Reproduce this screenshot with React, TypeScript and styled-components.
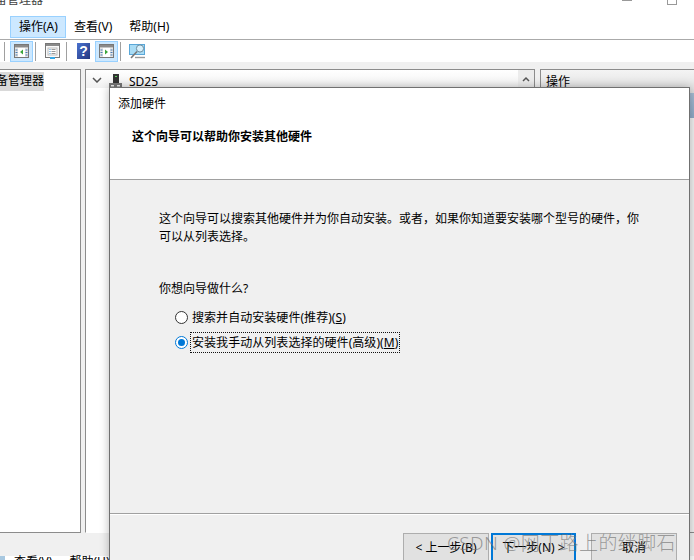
import React from "react";
import styled, { createGlobalStyle } from "styled-components";

const UI_FONT = `"Noto Sans", "Noto Sans CJK SC", "Liberation Sans", sans-serif`;

const Global = createGlobalStyle`
  html, body { margin: 0; padding: 0; background: #fff; }
  body { width: 694px; height: 560px; overflow: hidden; font-family: ${UI_FONT}; color: #000; }
`;

const Page = styled.div`
  position: relative;
  width: 694px;
  height: 560px;
  overflow: hidden;
  display: flex;
  flex-direction: column;
  background: #fff;
`;
const TitleBar = styled.div`
  height: 15px;
  display: flex;
  justify-content: space-between;
  overflow: hidden;
`;
const TitleText = styled.div`
  font-size: 12px;
  line-height: 13px;
  margin-top: -7px;
  margin-left: -17px;
  color: #444;
  white-space: nowrap;
`;
const WinButtons = styled.div`
  display: flex;
  gap: 35px;
  margin-right: 17px;
  align-items: flex-start;
`;
const MinBtn = styled.div`
  width: 10px;
  height: 1px;
  background: #999;
`;
const MaxBtn = styled.div`
  width: 8px;
  height: 4px;
  border: 1px solid #999;
  border-top: 0;
`;
const MenuBar = styled.div`
  height: 24px;
  display: flex;
  align-items: center;
  padding-left: 10px;
  border-bottom: 1px solid #aaa;
`;
const MenuItem = styled.div<{ $active?: boolean }>`
  height: 22px;
  padding: 0 ${(p) => (p.$active ? "8px 0 9px" : "9px 0 8px")};
  font-size: 12px;
  line-height: 22px;
  background: ${(p) => (p.$active ? "#cce8ff" : "transparent")};
  outline: ${(p) => (p.$active ? "1px solid #99d1ff" : "none")};
  outline-offset: -1px;
`;
const ToolBar = styled.div`
  height: 22px;
  padding-left: 4px;
  display: flex;
  align-items: center;
`;
const Sep = styled.div<{ $first?: boolean }>`
  width: 1px;
  height: 19px;
  background: #a0a0a0;
  margin: 0 5px 0 ${(p) => (p.$first ? "0" : "2px")};
`;
const ToolBtn = styled.div<{ $on?: boolean }>`
  width: 23px;
  height: 21px;
  display: flex;
  align-items: center;
  justify-content: center;
  background: ${(p) => (p.$on ? "#cce8ff" : "transparent")};
  outline: ${(p) => (p.$on ? "1px solid #99d1ff" : "none")};
  outline-offset: -1px;
`;
const Work = styled.div`
  flex: 1;
  display: flex;
  background: #f0f0f0;
  padding-top: 7px;
  min-height: 0;
  flex-direction: column;
`;
const Panes = styled.div`
  height: 464px;
  display: flex;
`;
const TreePane = styled.div`
  width: 81px;
  box-sizing: border-box;
  background: #fff;
  border: 1px solid #8c8c8c;
  border-left: 0;
  padding-top: 2px;
  overflow: hidden;
`;
const TreeLabel = styled.div`
  box-sizing: border-box;
  background: #d9d9d9;
  font-size: 12px;
  line-height: 18px;
  height: 19px;
  width: 44px;
  padding-left: 4px;
  white-space: nowrap;
  direction: rtl;
  overflow: hidden;
`;
const MidPane = styled.div`
  margin-left: 4px;
  width: 450px;
  box-sizing: border-box;
  border: 1px solid #8c8c8c;
  border-bottom-color: #fff;
  background: #fff;
`;
const DeviceRow = styled.div`
  height: 18px;
  display: flex;
  align-items: center;
  background: linear-gradient(#fff, #f1f1f1);
`;
const Chevron = styled.div`
  margin-left: 6px;
  margin-top: 2px;
  display: flex;
  width: 12px;
`;
const DeviceIcon = styled.div`
  margin-left: 5px;
  margin-top: 4px;
  display: flex;
`;
const DeviceName = styled.div`
  font-size: 12px;
  margin-left: 6px;
  margin-top: 5px;
`;
const CollapseBtn = styled.div`
  margin-left: auto;
  width: 16px;
  height: 18px;
  background: #ececec;
  display: flex;
  align-items: center;
  justify-content: center;
`;
const ActionPane = styled.div`
  margin-left: 5px;
  flex: 1;
  border: 1px solid #8c8c8c;
  border-right: 0;
  background: #f0f0f0;
  display: flex;
  flex-direction: column;
`;
const ActionHeader = styled.div`
  height: 23px;
  flex: none;
  background: linear-gradient(#f4f4f4, #dedede);
  font-size: 12px;
  padding: 3px 0 0 5px;
  box-sizing: border-box;
  line-height: 18px;
`;
const ActionSection = styled.div`
  height: 25px;
  background: linear-gradient(#a6bcd3, #8ea9c6);
`;
const StatusBar = styled.div`
  flex: 1;
  position: relative;
  overflow: hidden;
`;
const StatusStrip = styled.div`
  position: absolute;
  left: 0;
  right: 0;
  top: 23px;
  bottom: 0;
  background: linear-gradient(90deg, #a8c8e0 5px, #fff 5px);
  font-size: 12px;
  line-height: 12px;
  padding-left: 14px;
  display: flex;
  gap: 17px;
  white-space: nowrap;
`;

const Dialog = styled.div`
  position: absolute;
  left: 109px;
  top: 87px;
  width: 581px;
  height: 480px;
  box-sizing: border-box;
  border: 1px solid #707070;
  background: #f0f0f0;
  display: flex;
  flex-direction: column;
  box-shadow: 0 0 9px rgba(0, 0, 0, 0.28);
`;
const DialogHeader = styled.div`
  height: 91px;
  background: #fff;
  border-bottom: 1px solid #a0a0a0;
  display: flex;
  flex-direction: column;
`;
const DialogTitle = styled.div`
  font-size: 12px;
  line-height: 16px;
  margin: 8px 0 0 8px;
`;
const Heading = styled.div`
  font-size: 12px;
  font-weight: 700;
  line-height: 16px;
  margin: 17px 0 0 22px;
`;
const DialogBody = styled.div`
  height: 334px;
  padding: 30px 40px 0 49px;
  border-bottom: 1px solid #a0a0a0;
  box-sizing: border-box;
`;
const Paragraph = styled.div`
  font-size: 12px;
  line-height: 18px;
`;
const Question = styled.div`
  font-size: 12px;
  line-height: 18px;
  margin-top: 34px;
`;
const RadioList = styled.div`
  margin: 10px 0 0 16px;
  display: flex;
  flex-direction: column;
  gap: 6px;
`;
const RadioRow = styled.div`
  display: flex;
  align-items: center;
  height: 19px;
  gap: 3px;
`;
const RadioDot = styled.div<{ $on?: boolean }>`
  width: 13px;
  height: 13px;
  box-sizing: border-box;
  border-radius: 50%;
  border: 1px solid ${(p) => (p.$on ? "#0078d7" : "#333")};
  background: #fff;
  display: flex;
  align-items: center;
  justify-content: center;
  &::after {
    content: "";
    display: ${(p) => (p.$on ? "block" : "none")};
    width: 7px;
    height: 7px;
    border-radius: 50%;
    background: #0078d7;
  }
`;
const RadioLabel = styled.div<{ $focus?: boolean }>`
  font-size: 12px;
  line-height: 19px;
  letter-spacing: 0.05px;
  padding: 0 1px;
  outline: ${(p) => (p.$focus ? "1px dotted #111" : "none")};
  white-space: nowrap;
`;
const U = styled.span`
  text-decoration: underline;
`;
const Footer = styled.div`
  flex: 1;
  border-top: 1px solid #fff;
  display: flex;
  padding: 18px 0 0 293px;
`;
const Btn = styled.div<{ $primary?: boolean; $w: number; $ml?: number }>`
  width: ${(p) => p.$w}px;
  height: 30px;
  box-sizing: border-box;
  margin-left: ${(p) => p.$ml ?? 0}px;
  border: ${(p) => (p.$primary ? "2px solid #0078d7" : "1px solid #adadad")};
  background: #e1e1e1;
  font-size: 12px;
  line-height: ${(p) => (p.$primary ? "25px" : "27px")};
  text-align: center;
  white-space: nowrap;
`;
const Watermark = styled.div`
  position: absolute;
  left: 447px;
  top: 530px;
  font-size: 19px;
  font-weight: 300;
  line-height: 26px;
  letter-spacing: 0.4px;
  color: rgba(110, 110, 110, 0.65);
  white-space: nowrap;
`;

const WinIcon = ({ arrow, left }: { arrow: string; left: boolean }) => (
  <svg width="15" height="14" viewBox="0 0 15 14">
    <rect x="0.5" y="0.5" width="14" height="13" fill="#fff" stroke="#777" />
    <rect x="1" y="1" width="13" height="2.5" fill="#8a8a8a" />
    <rect x="1" y="4" width="3" height="9" fill="#e4e4e4" />
    <rect x="11" y="4" width="3" height="9" fill="#e4e4e4" />
    <path d="M1.5 6h2M1.5 8.5h2M1.5 11h2M11.5 6h2M11.5 8.5h2M11.5 11h2" stroke="#4a7db5" />
    <path d={left ? "M9 5.5v5L6 8z" : "M6 5.5v5L9 8z"} fill={arrow} />
  </svg>
);
const PropsIcon = () => (
  <svg width="15" height="16" viewBox="0 0 15 16">
    <rect x="0.5" y="0.5" width="14" height="14" fill="#fafafa" stroke="#777" />
    <rect x="1" y="1" width="13" height="2" fill="#8a8a8a" />
    <rect x="3" y="5" width="9" height="7" fill="#fff" stroke="#bbb" />
    <path d="M4.5 6.5h1M4.5 8.5h1M4.5 10.5h1" stroke="#2a8ad4" />
    <path d="M6.5 6.5h4M6.5 8.5h4M6.5 10.5h4" stroke="#999" />
    <rect x="5" y="14" width="5" height="2" fill="#35a8e8" />
  </svg>
);
const HelpIcon = () => (
  <svg width="13" height="16" viewBox="0 0 13 16">
    <defs>
      <linearGradient id="helpFill" x1="0" x2="1" y1="0" y2="1">
        <stop offset="0" stopColor="#4a72cf" />
        <stop offset="1" stopColor="#24367f" />
      </linearGradient>
    </defs>
    <rect width="13" height="16" fill="url(#helpFill)" />
    <text x="6.5" y="13" textAnchor="middle" fontFamily="Liberation Sans" fontSize="14" fontWeight="700" fill="#fff">?</text>
  </svg>
);
const MonitorIcon = () => (
  <svg width="17" height="15" viewBox="0 0 17 15">
    <rect x="0.5" y="0.5" width="15" height="10" fill="#a9dcf5" stroke="#5aa7d8" />
    <circle cx="11" cy="4.5" r="3.6" fill="#d8f0fb" stroke="#6d8c9e" />
    <path d="M8 7.5L2 14" stroke="#777" strokeWidth="1.6" />
    <path d="M6 13.5h10" stroke="#999" strokeWidth="1.4" />
  </svg>
);
const PcIcon = () => (
  <svg width="14" height="14" viewBox="0 0 14 14">
    <rect x="4" y="0" width="6" height="9" fill="#333" />
    <rect x="6" y="2" width="2" height="1" fill="#5ad05a" />
    <rect x="0" y="9" width="13" height="5" fill="#777" />
    <rect x="2" y="11" width="3" height="1.5" fill="#eee" />
    <rect x="8" y="11" width="3" height="1.5" fill="#eee" />
  </svg>
);

export default function App() {
  return (
    <>
      <Global />
      <Page>
        <TitleBar>
          <TitleText>设备管理器</TitleText>
          <WinButtons>
            <MinBtn />
            <MaxBtn />
          </WinButtons>
        </TitleBar>
        <MenuBar>
          <MenuItem $active>操作(A)</MenuItem>
          <MenuItem>查看(V)</MenuItem>
          <MenuItem>帮助(H)</MenuItem>
        </MenuBar>
        <ToolBar>
          <Sep $first />
          <ToolBtn $on><WinIcon arrow="#3aa53a" left /></ToolBtn>
          <Sep />
          <ToolBtn><PropsIcon /></ToolBtn>
          <Sep />
          <ToolBtn><HelpIcon /></ToolBtn>
          <ToolBtn $on><WinIcon arrow="#3aa53a" left={false} /></ToolBtn>
          <Sep />
          <ToolBtn><MonitorIcon /></ToolBtn>
        </ToolBar>
        <Work>
          <Panes>
            <TreePane>
              <TreeLabel>备管理器</TreeLabel>
            </TreePane>
            <MidPane>
              <DeviceRow>
                <Chevron>
                  <svg width="10" height="6" viewBox="0 0 10 6">
                    <path d="M1 1l4 4 4-4" fill="none" stroke="#555" strokeWidth="1.5" />
                  </svg>
                </Chevron>
                <DeviceIcon><PcIcon /></DeviceIcon>
                <DeviceName>SD25</DeviceName>
                <CollapseBtn>
                  <svg width="8" height="6" viewBox="0 0 8 6">
                    <path d="M1 5l3-3 3 3" fill="none" stroke="#555" strokeWidth="1.5" />
                  </svg>
                </CollapseBtn>
              </DeviceRow>
            </MidPane>
            <ActionPane>
              <ActionHeader>操作</ActionHeader>
              <ActionSection />
            </ActionPane>
          </Panes>
          <StatusBar>
            <StatusStrip>
              <span>查看(V)</span>
              <span>帮助(H)</span>
            </StatusStrip>
          </StatusBar>
        </Work>
        <Dialog>
          <DialogHeader>
            <DialogTitle>添加硬件</DialogTitle>
            <Heading>这个向导可以帮助你安装其他硬件</Heading>
          </DialogHeader>
          <DialogBody>
            <Paragraph>
              这个向导可以搜索其他硬件并为你自动安装。或者，如果你知道要安装哪个型号的硬件，你
              <br />
              可以从列表选择。
            </Paragraph>
            <Question>你想向导做什么?</Question>
            <RadioList>
              <RadioRow>
                <RadioDot />
                <RadioLabel>搜索并自动安装硬件(推荐)(<U>S</U>)</RadioLabel>
              </RadioRow>
              <RadioRow>
                <RadioDot $on />
                <RadioLabel $focus>安装我手动从列表选择的硬件(高级)(<U>M</U>)</RadioLabel>
              </RadioRow>
            </RadioList>
          </DialogBody>
          <Footer>
            <Btn $w={86}>&lt; 上一步(B)</Btn>
            <Btn $primary $w={85} $ml={2}>下一步(N) &gt;</Btn>
            <Btn $w={86} $ml={15}>取消</Btn>
          </Footer>
        </Dialog>
        <Watermark>CSDN @网丁路上的绊脚石</Watermark>
      </Page>
    </>
  );
}
